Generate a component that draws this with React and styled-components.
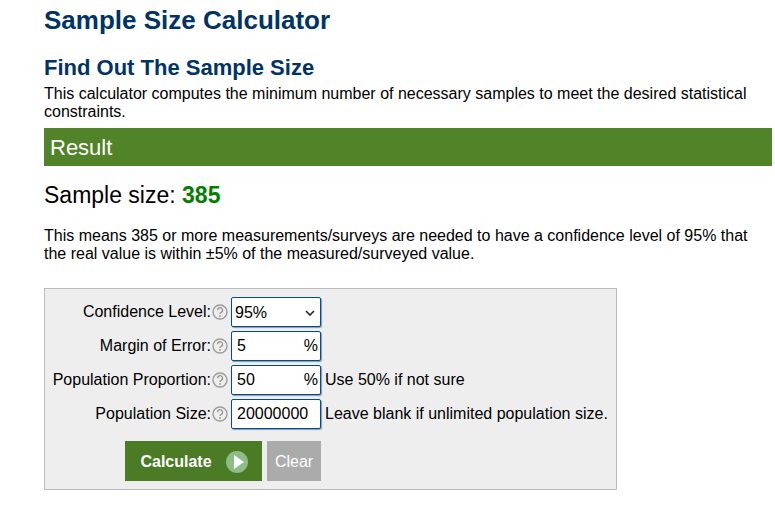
import React from "react";
import styled, { createGlobalStyle } from "styled-components";

const Global = createGlobalStyle`
  html, body { margin: 0; padding: 0; background: #fff; overflow: hidden; }
  body { font-family: "Liberation Sans", Arial, sans-serif; font-size: 16px; color: #000; }
`;

const Page = styled.main`
  width: 728px;
  margin-left: 44px;
  padding-top: 5px;
`;

const Title = styled.h1`
  margin: 0;
  font-size: 26px;
  line-height: 30px;
  font-weight: 700;
  color: #003366;
`;

const Subtitle = styled.h2`
  margin: 20px 0 0;
  font-size: 22px;
  line-height: 26px;
  font-weight: 700;
  color: #003366;
`;

const Intro = styled.p`
  margin: 4px 0 0;
  line-height: 18px;
`;

const Banner = styled.div`
  margin-top: 7px;
  height: 38px;
  padding-left: 6px;
  background: #518328;
  color: #fff;
  font-size: 22px;
  line-height: 39px;
`;

const SizeLine = styled.div`
  margin-top: 15px;
  font-size: 23px;
  line-height: 28px;
`;

const SizeValue = styled.strong`
  color: #008000;
`;

const Explanation = styled.p`
  margin: 18px 0 0;
  line-height: 18px;
  width: 712px;
`;

const Panel = styled.form`
  box-sizing: border-box;
  width: 573px;
  height: 202px;
  margin-top: 25px;
  padding: 6px 7px 0 8px;
  background: #eeeeee;
  border: 1px solid #bbbbbb;
`;

const Row = styled.div`
  display: grid;
  grid-template-columns: 178px 90px auto;
  align-items: center;
  height: 34px;
`;

const Label = styled.label`
  display: flex;
  justify-content: flex-end;
  align-items: center;
  gap: 1px;
  padding-right: 3px;
  white-space: nowrap;
`;

const HelpSvg = styled.svg`
  flex: none;
  width: 16px;
  height: 16px;
`;

const Hint = styled.span`
  margin-left: 4px;
`;

const boxStyles = `
  box-sizing: border-box;
  width: 90px;
  height: 30px;
  background: #fff;
  border: 1px solid #044b94;
  border-radius: 2px;
  box-shadow: 1px 1px 1px #8a9aa8;
  font-family: "Liberation Sans", Arial, sans-serif;
  font-size: 16px;
  color: #000;
`;

const SelectBox = styled.div`
  ${boxStyles}
  display: flex;
  align-items: center;
  justify-content: space-between;
  padding: 1px 5px 0 3px;
`;

const FieldBox = styled.div`
  ${boxStyles}
  display: flex;
  align-items: center;
  justify-content: space-between;
  padding: 0 2px 0 5px;
`;

const Actions = styled.div`
  display: flex;
  gap: 5px;
  margin: 10px 0 0 72px;
`;

const CalcButton = styled.button`
  display: flex;
  align-items: center;
  justify-content: center;
  gap: 14px;
  width: 137px;
  height: 40px;
  padding: 1px 0 0 1px;
  border: 0;
  background: #4c7b25;
  color: #fff;
  font-family: "Liberation Sans", Arial, sans-serif;
  font-size: 16px;
  font-weight: 700;
`;

const ClearButton = styled.button`
  width: 54px;
  height: 40px;
  padding: 1px 0 0;
  border: 0;
  background: #ababab;
  color: #fff;
  font-family: "Liberation Sans", Arial, sans-serif;
  font-size: 16px;
`;

const HelpIcon = () => (
  <HelpSvg viewBox="0 0 16 16" aria-hidden="true">
    <circle cx="8" cy="8" r="7" fill="none" stroke="#9c9c9c" strokeWidth="1.4" />
    <path d="M5.5 6.2a2.5 2.5 0 1 1 3.7 2.2c-.8.4-1.2.8-1.2 1.6" fill="none" stroke="#949494" strokeWidth="1.3" />
    <circle cx="8" cy="12" r=".9" fill="#949494" />
  </HelpSvg>
);

const Chevron = () => (
  <svg width="10" height="6" viewBox="0 0 10 6" aria-hidden="true">
    <path d="M1 1l4 4 4-4" fill="none" stroke="#222" strokeWidth="1.6" />
  </svg>
);

const PlayIcon = () => (
  <svg width="22" height="22" viewBox="0 0 22 22" aria-hidden="true">
    <circle cx="11" cy="11" r="11" fill="#8fbb86" />
    <path d="M8 4L18 11L8 18Z" fill="#fff" />
  </svg>
);

const fields = [
  { label: "Margin of Error:", value: "5", unit: "%" },
  { label: "Population Proportion:", value: "50", unit: "%", hint: "Use 50% if not sure" },
  { label: "Population Size:", value: "20000000", hint: "Leave blank if unlimited population size." },
];

export default function App() {
  return (
    <Page>
      <Global />
      <Title>Sample Size Calculator</Title>
      <Subtitle>Find Out The Sample Size</Subtitle>
      <Intro>This calculator computes the minimum number of necessary samples to meet the desired statistical constraints.</Intro>
      <Banner>Result</Banner>
      <SizeLine>Sample size: <SizeValue>385</SizeValue></SizeLine>
      <Explanation>This means 385 or more measurements/surveys are needed to have a confidence level of 95% that the real value is within ±5% of the measured/surveyed value.</Explanation>
      <Panel>
        <Row>
          <Label>Confidence Level:<HelpIcon /></Label>
          <SelectBox>95%<Chevron /></SelectBox>
        </Row>
        {fields.map((f) => (
          <Row key={f.label}>
            <Label>{f.label}<HelpIcon /></Label>
            <FieldBox><span>{f.value}</span>{f.unit && <span>{f.unit}</span>}</FieldBox>
            {f.hint && <Hint>{f.hint}</Hint>}
          </Row>
        ))}
        <Actions>
          <CalcButton type="button">Calculate<PlayIcon /></CalcButton>
          <ClearButton type="button">Clear</ClearButton>
        </Actions>
      </Panel>
    </Page>
  );
}
